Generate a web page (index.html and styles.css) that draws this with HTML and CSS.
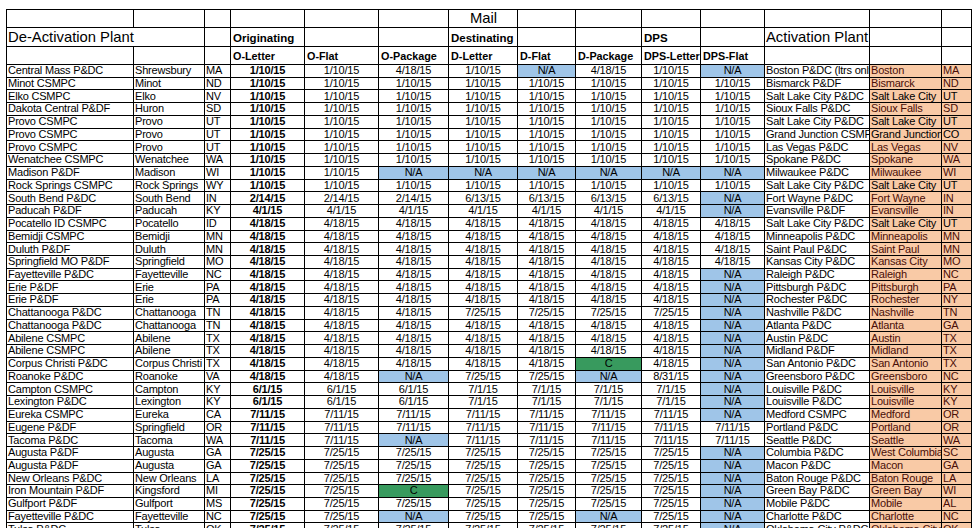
FILE: index.html
```html
<!DOCTYPE html>
<html>
<head>
<meta charset="utf-8">
<link rel="stylesheet" href="styles.css">
</head>
<body>
<table class="sheet">
<colgroup>
<col class="w-a"><col class="w-b"><col class="w-c"><col class="w-d"><col class="w-e"><col class="w-f"><col class="w-g"><col class="w-h"><col class="w-i"><col class="w-j"><col class="w-k"><col class="w-l"><col class="w-m"><col class="w-n">
</colgroup>
<tr class="h1"><td></td><td></td><td></td><td></td><td></td><td></td><td class="big ctr">Mail</td><td></td><td></td><td></td><td></td><td></td><td></td><td></td></tr>
<tr class="h2"><td class="big" colspan="2">De-Activation Plant</td><td></td><td class="grp">Originating</td><td></td><td></td><td class="grp">Destinating</td><td></td><td></td><td class="grp">DPS</td><td></td><td class="big">Activation Plant</td><td></td><td></td></tr>
<tr class="h3"><td></td><td></td><td></td><td class="sub">O-Letter</td><td class="sub">O-Flat</td><td class="sub">O-Package</td><td class="sub">D-Letter</td><td class="sub">D-Flat</td><td class="sub">D-Package</td><td class="sub">DPS-Letter</td><td class="sub">DPS-Flat</td><td></td><td></td><td></td></tr>
<tr><td>Central Mass P&amp;DC</td><td>Shrewsbury</td><td>MA</td><td class="dt b">1/10/15</td><td class="dt">1/10/15</td><td class="dt">4/18/15</td><td class="dt">1/10/15</td><td class="dt na">N/A</td><td class="dt">4/18/15</td><td class="dt">1/10/15</td><td class="dt na">N/A</td><td>Boston P&amp;DC (ltrs only)</td><td class="or rd">Boston</td><td class="or rd">MA</td></tr>
<tr><td>Minot CSMPC</td><td>Minot</td><td>ND</td><td class="dt b">1/10/15</td><td class="dt">1/10/15</td><td class="dt">1/10/15</td><td class="dt">1/10/15</td><td class="dt">1/10/15</td><td class="dt">1/10/15</td><td class="dt">1/10/15</td><td class="dt">1/10/15</td><td>Bismarck P&amp;DF</td><td class="or rd">Bismarck</td><td class="or rd">ND</td></tr>
<tr><td>Elko CSMPC</td><td>Elko</td><td>NV</td><td class="dt b">1/10/15</td><td class="dt">1/10/15</td><td class="dt">1/10/15</td><td class="dt">1/10/15</td><td class="dt">1/10/15</td><td class="dt">1/10/15</td><td class="dt">1/10/15</td><td class="dt">1/10/15</td><td>Salt Lake City P&amp;DC</td><td class="or">Salt Lake City</td><td class="or">UT</td></tr>
<tr><td>Dakota Central P&amp;DF</td><td>Huron</td><td>SD</td><td class="dt b">1/10/15</td><td class="dt">1/10/15</td><td class="dt">1/10/15</td><td class="dt">1/10/15</td><td class="dt">1/10/15</td><td class="dt">1/10/15</td><td class="dt">1/10/15</td><td class="dt">1/10/15</td><td>Sioux Falls P&amp;DC</td><td class="or rd">Sioux Falls</td><td class="or rd">SD</td></tr>
<tr><td>Provo CSMPC</td><td>Provo</td><td>UT</td><td class="dt b">1/10/15</td><td class="dt">1/10/15</td><td class="dt">1/10/15</td><td class="dt">1/10/15</td><td class="dt">1/10/15</td><td class="dt">1/10/15</td><td class="dt">1/10/15</td><td class="dt">1/10/15</td><td>Salt Lake City P&amp;DC</td><td class="or">Salt Lake City</td><td class="or">UT</td></tr>
<tr><td>Provo CSMPC</td><td>Provo</td><td>UT</td><td class="dt b">1/10/15</td><td class="dt">1/10/15</td><td class="dt">1/10/15</td><td class="dt">1/10/15</td><td class="dt">1/10/15</td><td class="dt">1/10/15</td><td class="dt">1/10/15</td><td class="dt">1/10/15</td><td>Grand Junction CSMPC</td><td class="or">Grand Junction</td><td class="or">CO</td></tr>
<tr><td>Provo CSMPC</td><td>Provo</td><td>UT</td><td class="dt b">1/10/15</td><td class="dt">1/10/15</td><td class="dt">1/10/15</td><td class="dt">1/10/15</td><td class="dt">1/10/15</td><td class="dt">1/10/15</td><td class="dt">1/10/15</td><td class="dt">1/10/15</td><td>Las Vegas P&amp;DC</td><td class="or rd">Las Vegas</td><td class="or rd">NV</td></tr>
<tr><td>Wenatchee CSMPC</td><td>Wenatchee</td><td>WA</td><td class="dt b">1/10/15</td><td class="dt">1/10/15</td><td class="dt">1/10/15</td><td class="dt">1/10/15</td><td class="dt">1/10/15</td><td class="dt">1/10/15</td><td class="dt">1/10/15</td><td class="dt">1/10/15</td><td>Spokane P&amp;DC</td><td class="or rd">Spokane</td><td class="or rd">WA</td></tr>
<tr><td>Madison P&amp;DF</td><td>Madison</td><td>WI</td><td class="dt b">1/10/15</td><td class="dt">1/10/15</td><td class="dt na">N/A</td><td class="dt na">N/A</td><td class="dt na">N/A</td><td class="dt na">N/A</td><td class="dt na">N/A</td><td class="dt na">N/A</td><td>Milwaukee P&amp;DC</td><td class="or rd">Milwaukee</td><td class="or rd">WI</td></tr>
<tr><td>Rock Springs CSMPC</td><td>Rock Springs</td><td>WY</td><td class="dt b">1/10/15</td><td class="dt">1/10/15</td><td class="dt">1/10/15</td><td class="dt">1/10/15</td><td class="dt">1/10/15</td><td class="dt">1/10/15</td><td class="dt">1/10/15</td><td class="dt">1/10/15</td><td>Salt Lake City P&amp;DC</td><td class="or">Salt Lake City</td><td class="or">UT</td></tr>
<tr><td>South Bend P&amp;DC</td><td>South Bend</td><td>IN</td><td class="dt b">2/14/15</td><td class="dt">2/14/15</td><td class="dt">2/14/15</td><td class="dt">6/13/15</td><td class="dt">6/13/15</td><td class="dt">6/13/15</td><td class="dt">6/13/15</td><td class="dt na">N/A</td><td>Fort Wayne P&amp;DC</td><td class="or rd">Fort Wayne</td><td class="or rd">IN</td></tr>
<tr><td>Paducah P&amp;DF</td><td>Paducah</td><td>KY</td><td class="dt b">4/1/15</td><td class="dt">4/1/15</td><td class="dt">4/1/15</td><td class="dt">4/1/15</td><td class="dt">4/1/15</td><td class="dt">4/1/15</td><td class="dt">4/1/15</td><td class="dt na">N/A</td><td>Evansville P&amp;DF</td><td class="or rd">Evansville</td><td class="or rd">IN</td></tr>
<tr><td>Pocatello ID CSMPC</td><td>Pocatello</td><td>ID</td><td class="dt b">4/18/15</td><td class="dt">4/18/15</td><td class="dt">4/18/15</td><td class="dt">4/18/15</td><td class="dt">4/18/15</td><td class="dt">4/18/15</td><td class="dt">4/18/15</td><td class="dt">4/18/15</td><td>Salt Lake City P&amp;DC</td><td class="or">Salt Lake City</td><td class="or">UT</td></tr>
<tr><td>Bemidji CSMPC</td><td>Bemidji</td><td>MN</td><td class="dt b">4/18/15</td><td class="dt">4/18/15</td><td class="dt">4/18/15</td><td class="dt">4/18/15</td><td class="dt">4/18/15</td><td class="dt">4/18/15</td><td class="dt">4/18/15</td><td class="dt">4/18/15</td><td>Minneapolis P&amp;DC</td><td class="or rd">Minneapolis</td><td class="or rd">MN</td></tr>
<tr><td>Duluth P&amp;DF</td><td>Duluth</td><td>MN</td><td class="dt b">4/18/15</td><td class="dt">4/18/15</td><td class="dt">4/18/15</td><td class="dt">4/18/15</td><td class="dt">4/18/15</td><td class="dt">4/18/15</td><td class="dt">4/18/15</td><td class="dt">4/18/15</td><td>Saint Paul P&amp;DC</td><td class="or rd">Saint Paul</td><td class="or rd">MN</td></tr>
<tr><td>Springfield MO P&amp;DF</td><td>Springfield</td><td>MO</td><td class="dt b">4/18/15</td><td class="dt">4/18/15</td><td class="dt">4/18/15</td><td class="dt">4/18/15</td><td class="dt">4/18/15</td><td class="dt">4/18/15</td><td class="dt">4/18/15</td><td class="dt">4/18/15</td><td>Kansas City P&amp;DC</td><td class="or rd">Kansas City</td><td class="or rd">MO</td></tr>
<tr><td>Fayetteville P&amp;DC</td><td>Fayetteville</td><td>NC</td><td class="dt b">4/18/15</td><td class="dt">4/18/15</td><td class="dt">4/18/15</td><td class="dt">4/18/15</td><td class="dt">4/18/15</td><td class="dt">4/18/15</td><td class="dt">4/18/15</td><td class="dt na">N/A</td><td>Raleigh P&amp;DC</td><td class="or rd">Raleigh</td><td class="or rd">NC</td></tr>
<tr><td>Erie P&amp;DF</td><td>Erie</td><td>PA</td><td class="dt b">4/18/15</td><td class="dt">4/18/15</td><td class="dt">4/18/15</td><td class="dt">4/18/15</td><td class="dt">4/18/15</td><td class="dt">4/18/15</td><td class="dt">4/18/15</td><td class="dt na">N/A</td><td>Pittsburgh P&amp;DC</td><td class="or rd">Pittsburgh</td><td class="or rd">PA</td></tr>
<tr><td>Erie P&amp;DF</td><td>Erie</td><td>PA</td><td class="dt b">4/18/15</td><td class="dt">4/18/15</td><td class="dt">4/18/15</td><td class="dt">4/18/15</td><td class="dt">4/18/15</td><td class="dt">4/18/15</td><td class="dt">4/18/15</td><td class="dt na">N/A</td><td>Rochester P&amp;DC</td><td class="or rd">Rochester</td><td class="or rd">NY</td></tr>
<tr><td>Chattanooga P&amp;DC</td><td>Chattanooga</td><td>TN</td><td class="dt b">4/18/15</td><td class="dt">4/18/15</td><td class="dt">4/18/15</td><td class="dt">7/25/15</td><td class="dt">7/25/15</td><td class="dt">7/25/15</td><td class="dt">7/25/15</td><td class="dt na">N/A</td><td>Nashville P&amp;DC</td><td class="or rd">Nashville</td><td class="or rd">TN</td></tr>
<tr><td>Chattanooga P&amp;DC</td><td>Chattanooga</td><td>TN</td><td class="dt b">4/18/15</td><td class="dt">4/18/15</td><td class="dt">4/18/15</td><td class="dt">4/18/15</td><td class="dt">4/18/15</td><td class="dt">4/18/15</td><td class="dt">4/18/15</td><td class="dt na">N/A</td><td>Atlanta P&amp;DC</td><td class="or rd">Atlanta</td><td class="or rd">GA</td></tr>
<tr><td>Abilene CSMPC</td><td>Abilene</td><td>TX</td><td class="dt b">4/18/15</td><td class="dt">4/18/15</td><td class="dt">4/18/15</td><td class="dt">4/18/15</td><td class="dt">4/18/15</td><td class="dt">4/18/15</td><td class="dt">4/18/15</td><td class="dt na">N/A</td><td>Austin P&amp;DC</td><td class="or rd">Austin</td><td class="or rd">TX</td></tr>
<tr><td>Abilene CSMPC</td><td>Abilene</td><td>TX</td><td class="dt b">4/18/15</td><td class="dt">4/18/15</td><td class="dt">4/18/15</td><td class="dt">4/18/15</td><td class="dt">4/18/15</td><td class="dt">4/18/15</td><td class="dt">4/18/15</td><td class="dt na">N/A</td><td>Midland P&amp;DF</td><td class="or rd">Midland</td><td class="or rd">TX</td></tr>
<tr><td>Corpus Christi P&amp;DC</td><td>Corpus Christi</td><td>TX</td><td class="dt b">4/18/15</td><td class="dt">4/18/15</td><td class="dt">4/18/15</td><td class="dt">4/18/15</td><td class="dt">4/18/15</td><td class="dt gr">C</td><td class="dt">4/18/15</td><td class="dt na">N/A</td><td>San Antonio P&amp;DC</td><td class="or rd">San Antonio</td><td class="or rd">TX</td></tr>
<tr><td>Roanoke P&amp;DC</td><td>Roanoke</td><td>VA</td><td class="dt b">4/18/15</td><td class="dt">4/18/15</td><td class="dt na">N/A</td><td class="dt">7/25/15</td><td class="dt">7/25/15</td><td class="dt na">N/A</td><td class="dt">8/31/15</td><td class="dt na">N/A</td><td>Greensboro P&amp;DC</td><td class="or rd">Greensboro</td><td class="or rd">NC</td></tr>
<tr><td>Campton CSMPC</td><td>Campton</td><td>KY</td><td class="dt b">6/1/15</td><td class="dt">6/1/15</td><td class="dt">6/1/15</td><td class="dt">7/1/15</td><td class="dt">7/1/15</td><td class="dt">7/1/15</td><td class="dt">7/1/15</td><td class="dt na">N/A</td><td>Louisville P&amp;DC</td><td class="or rd">Louisville</td><td class="or rd">KY</td></tr>
<tr><td>Lexington P&amp;DC</td><td>Lexington</td><td>KY</td><td class="dt b">6/1/15</td><td class="dt">6/1/15</td><td class="dt">6/1/15</td><td class="dt">7/1/15</td><td class="dt">7/1/15</td><td class="dt">7/1/15</td><td class="dt">7/1/15</td><td class="dt na">N/A</td><td>Louisville P&amp;DC</td><td class="or rd">Louisville</td><td class="or rd">KY</td></tr>
<tr><td>Eureka CSMPC</td><td>Eureka</td><td>CA</td><td class="dt b">7/11/15</td><td class="dt">7/11/15</td><td class="dt">7/11/15</td><td class="dt">7/11/15</td><td class="dt">7/11/15</td><td class="dt">7/11/15</td><td class="dt">7/11/15</td><td class="dt na">N/A</td><td>Medford CSMPC</td><td class="or rd">Medford</td><td class="or rd">OR</td></tr>
<tr><td>Eugene P&amp;DF</td><td>Springfield</td><td>OR</td><td class="dt b">7/11/15</td><td class="dt">7/11/15</td><td class="dt">7/11/15</td><td class="dt">7/11/15</td><td class="dt">7/11/15</td><td class="dt">7/11/15</td><td class="dt">7/11/15</td><td class="dt">7/11/15</td><td>Portland P&amp;DC</td><td class="or rd">Portland</td><td class="or rd">OR</td></tr>
<tr><td>Tacoma P&amp;DC</td><td>Tacoma</td><td>WA</td><td class="dt b">7/11/15</td><td class="dt">7/11/15</td><td class="dt na">N/A</td><td class="dt">7/11/15</td><td class="dt">7/11/15</td><td class="dt">7/11/15</td><td class="dt">7/11/15</td><td class="dt">7/11/15</td><td>Seattle P&amp;DC</td><td class="or rd">Seattle</td><td class="or rd">WA</td></tr>
<tr><td>Augusta P&amp;DF</td><td>Augusta</td><td>GA</td><td class="dt b">7/25/15</td><td class="dt">7/25/15</td><td class="dt">7/25/15</td><td class="dt">7/25/15</td><td class="dt">7/25/15</td><td class="dt">7/25/15</td><td class="dt">7/25/15</td><td class="dt na">N/A</td><td>Columbia P&amp;DC</td><td class="or rd">West Columbia</td><td class="or rd">SC</td></tr>
<tr><td>Augusta P&amp;DF</td><td>Augusta</td><td>GA</td><td class="dt b">7/25/15</td><td class="dt">7/25/15</td><td class="dt">7/25/15</td><td class="dt">7/25/15</td><td class="dt">7/25/15</td><td class="dt">7/25/15</td><td class="dt">7/25/15</td><td class="dt na">N/A</td><td>Macon P&amp;DC</td><td class="or rd">Macon</td><td class="or rd">GA</td></tr>
<tr><td>New Orleans P&amp;DC</td><td>New Orleans</td><td>LA</td><td class="dt b">7/25/15</td><td class="dt">7/25/15</td><td class="dt">7/25/15</td><td class="dt">7/25/15</td><td class="dt">7/25/15</td><td class="dt">7/25/15</td><td class="dt">7/25/15</td><td class="dt na">N/A</td><td>Baton Rouge P&amp;DC</td><td class="or rd">Baton Rouge</td><td class="or rd">LA</td></tr>
<tr><td>Iron Mountain P&amp;DF</td><td>Kingsford</td><td>MI</td><td class="dt b">7/25/15</td><td class="dt">7/25/15</td><td class="dt gr">C</td><td class="dt">7/25/15</td><td class="dt">7/25/15</td><td class="dt">7/25/15</td><td class="dt">7/25/15</td><td class="dt na">N/A</td><td>Green Bay P&amp;DC</td><td class="or rd">Green Bay</td><td class="or rd">WI</td></tr>
<tr><td>Gulfport P&amp;DF</td><td>Gulfport</td><td>MS</td><td class="dt b">7/25/15</td><td class="dt">7/25/15</td><td class="dt">7/25/15</td><td class="dt">7/25/15</td><td class="dt">7/25/15</td><td class="dt">7/25/15</td><td class="dt">7/25/15</td><td class="dt na">N/A</td><td>Mobile P&amp;DC</td><td class="or rd">Mobile</td><td class="or rd">AL</td></tr>
<tr><td>Fayetteville P&amp;DC</td><td>Fayetteville</td><td>NC</td><td class="dt b">7/25/15</td><td class="dt">7/25/15</td><td class="dt na">N/A</td><td class="dt">7/25/15</td><td class="dt">7/25/15</td><td class="dt na">N/A</td><td class="dt">7/25/15</td><td class="dt na">N/A</td><td>Charlotte P&amp;DC</td><td class="or rd">Charlotte</td><td class="or rd">NC</td></tr>
<tr><td>Tulsa P&amp;DC</td><td>Tulsa</td><td>OK</td><td class="dt b">7/25/15</td><td class="dt">7/25/15</td><td class="dt">7/25/15</td><td class="dt">7/25/15</td><td class="dt">7/25/15</td><td class="dt">7/25/15</td><td class="dt">7/25/15</td><td class="dt na">N/A</td><td>Oklahoma City P&amp;DC</td><td class="or rd">Oklahoma City</td><td class="or rd">OK</td></tr>
</table>
</body>
</html>
```

FILE: styles.css
```css
html, body {
  margin: 0;
  padding: 0;
  background: #ffffff;
}

body {
  padding: 9px 0 0 6px;
  font-family: "Liberation Sans", Arial, sans-serif;
  color: #000;
  overflow: hidden;
}

.sheet {
  border-collapse: collapse;
  table-layout: fixed;
  width: 966px;
}

.w-a { width: 127px; }
.w-b { width: 71px; }
.w-c { width: 26px; }
.w-d { width: 74px; }
.w-e { width: 74px; }
.w-f { width: 70px; }
.w-g { width: 69px; }
.w-h { width: 58px; }
.w-i { width: 66px; }
.w-j { width: 59px; }
.w-k { width: 64px; }
.w-l { width: 105px; }
.w-m { width: 72px; }
.w-n { width: 30px; }

.sheet td {
  border: 1px solid #000;
  padding: 0 0 1px 1px;
  height: 10.74px;
  font-size: 11px;
  letter-spacing: -0.2px;
  line-height: 10.5px;
  white-space: nowrap;
  overflow: hidden;
  vertical-align: bottom;
  text-align: left;
}

.sheet .h1 td { height: 16px; }
.sheet .h2 td { height: 17px; }
.sheet .h3 td { height: 16px; }

.sheet td.big {
  font-size: 14.8px;
  letter-spacing: 0;
  line-height: 17px;
  padding: 0 0 0 1px;
}

.sheet td.ctr { text-align: center; }

.sheet td.grp {
  font-size: 11.5px;
  letter-spacing: 0;
  font-weight: bold;
  line-height: 14px;
  padding: 0 0 1px 2px;
}

.sheet td.sub {
  font-size: 10.8px;
  letter-spacing: 0;
  font-weight: bold;
  line-height: 14px;
  padding: 0 0 1px 2px;
}

.sheet td.dt { text-align: center; padding-left: 0; }
.sheet td.b { font-weight: bold; }
.sheet td.na { background: #9fc5e8; }
.sheet td.gr { background: #389a5e; }
.sheet td.or { background: #f9caa6; }
.sheet td.rd { color: #4a0e06; }
```
